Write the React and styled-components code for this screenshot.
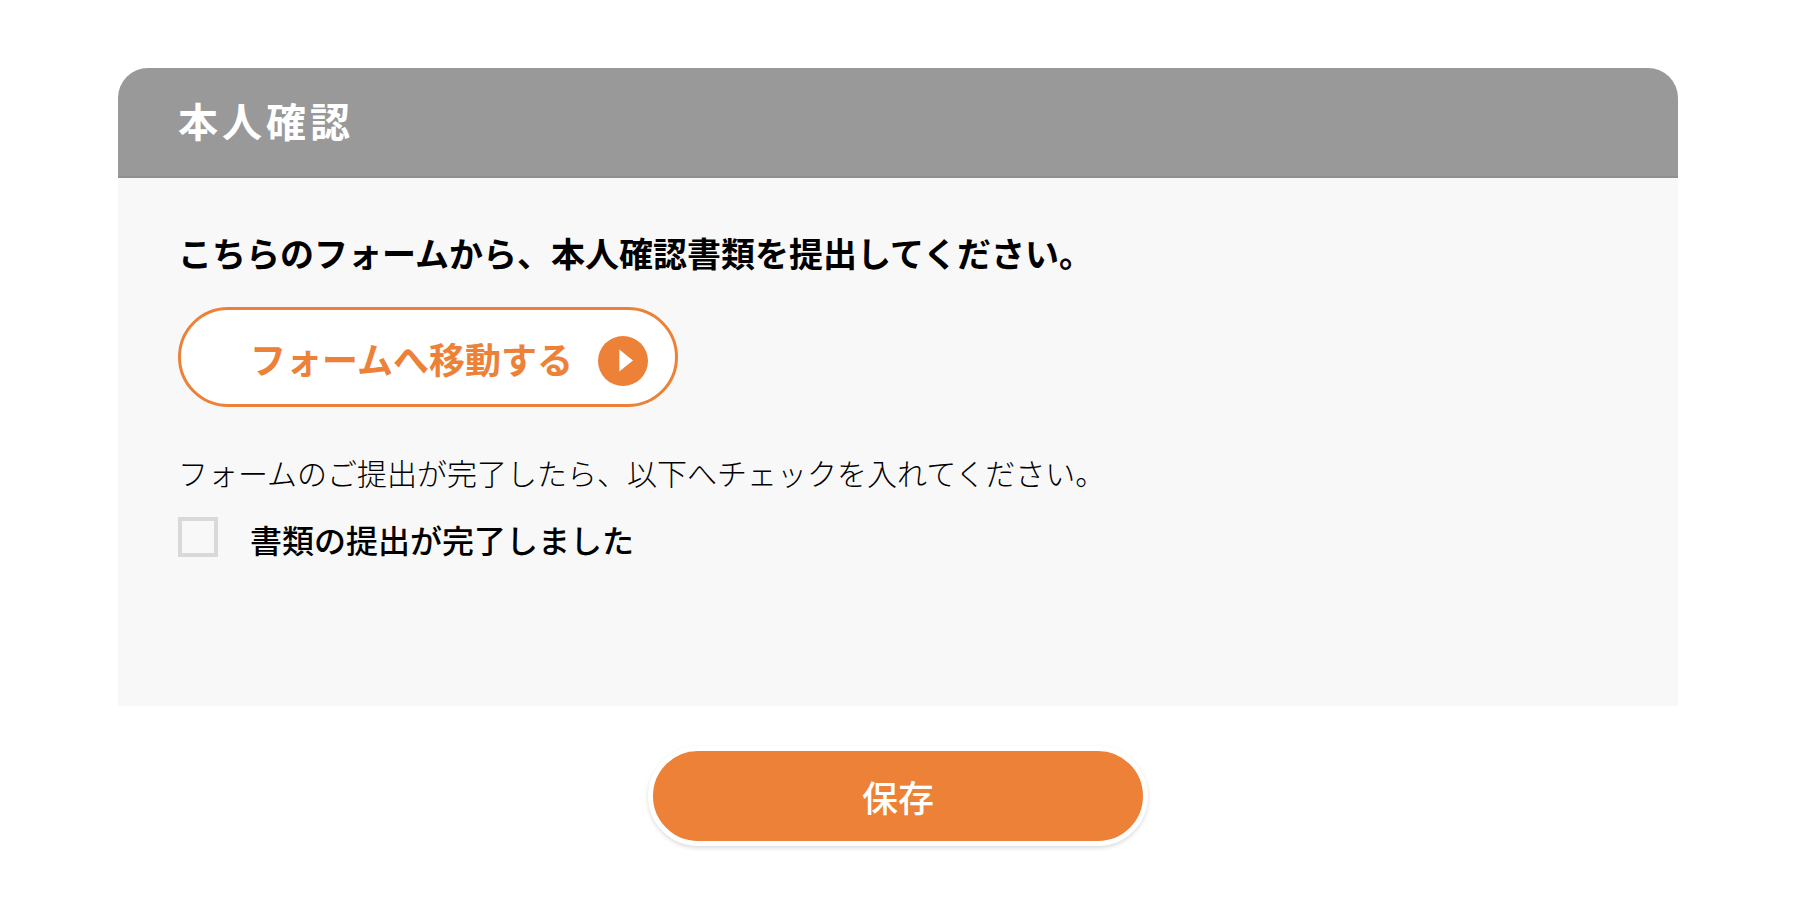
import React from "react"
import styled, { createGlobalStyle } from "styled-components"

export default function App() {
  return (
    <Page>
      <GlobalStyle />
      <Card>
        <CardHeader>
          <Title>本人確認</Title>
        </CardHeader>
        <CardBody>
          <Lead>こちらのフォームから、本人確認書類を提出してください。</Lead>
          <FormLink href="#form">
            フォームへ移動する
            <ArrowIcon viewBox="0 0 50 50" aria-hidden="true">
              <circle cx="25" cy="25" r="25" />
              <path d="M21.3 13.5v22l13.7-11z" />
            </ArrowIcon>
          </FormLink>
          <Note>フォームのご提出が完了したら、以下へチェックを入れてください。</Note>
          <CheckLabel htmlFor="submitted">
            <Checkbox id="submitted" type="checkbox" />
            書類の提出が完了しました
          </CheckLabel>
        </CardBody>
      </Card>
      <SaveButton type="button">保存</SaveButton>
    </Page>
  )
}

const GlobalStyle = createGlobalStyle`
  * {
    box-sizing: border-box;
  }
  body {
    margin: 0;
    background: #ffffff;
    color: #000000;
    font-family: "Noto Sans CJK JP", sans-serif;
  }
`

const Page = styled.main`
  display: flex;
  flex-direction: column;
  align-items: center;
  gap: 40px;
  padding: 68px 142px 72px 118px;
`

const Card = styled.section`
  width: 100%;
  background: #f8f8f8;
  border-radius: 30px 30px 0 0;
  overflow: hidden;
`

const CardHeader = styled.header`
  padding: 22px 60px 26px;
  background: #999999;
  border-bottom: 2px solid #908e8e;
`

const Title = styled.h1`
  margin: 0;
  color: #ffffff;
  font-size: 40px;
  font-weight: 700;
  line-height: 60px;
  letter-spacing: 4px;
`

const CardBody = styled.div`
  display: flex;
  flex-direction: column;
  align-items: flex-start;
  padding: 49px 60px 141px;
`

const Lead = styled.p`
  margin: 0;
  font-size: 34px;
  font-weight: 700;
  line-height: 52px;
`

const FormLink = styled.a`
  display: flex;
  align-items: center;
  gap: 25px;
  height: 100px;
  margin: 28px 0 39px;
  padding: 2px 27px 0 69px;
  background: #ffffff;
  border: 3px solid #ec8137;
  border-radius: 50px;
  color: #ec8137;
  font-size: 36px;
  font-weight: 700;
  text-decoration: none;
`

const ArrowIcon = styled.svg`
  width: 50px;
  height: 50px;
  margin-top: 6px;

  circle {
    fill: #ec8137;
  }
  path {
    fill: #ffffff;
  }
`

const Note = styled.p`
  margin: 0;
  font-size: 30px;
  font-weight: 300;
  line-height: 52px;
`

const CheckLabel = styled.label`
  display: flex;
  align-items: center;
  gap: 32px;
  margin-top: 15px;
  font-size: 32px;
  font-weight: 500;
  line-height: 52px;
`

const Checkbox = styled.input`
  appearance: none;
  width: 40px;
  height: 40px;
  margin: 0 0 4px;
  border: 4px solid #d9d9d9;
`

const SaveButton = styled.button`
  width: 500px;
  height: 100px;
  padding: 0;
  background: #ec8137;
  border: 5px solid #ffffff;
  border-radius: 50px;
  box-shadow: 0 2px 4px rgba(0, 0, 0, 0.14);
  color: #ffffff;
  font-family: inherit;
  font-size: 36px;
  font-weight: 500;
`
